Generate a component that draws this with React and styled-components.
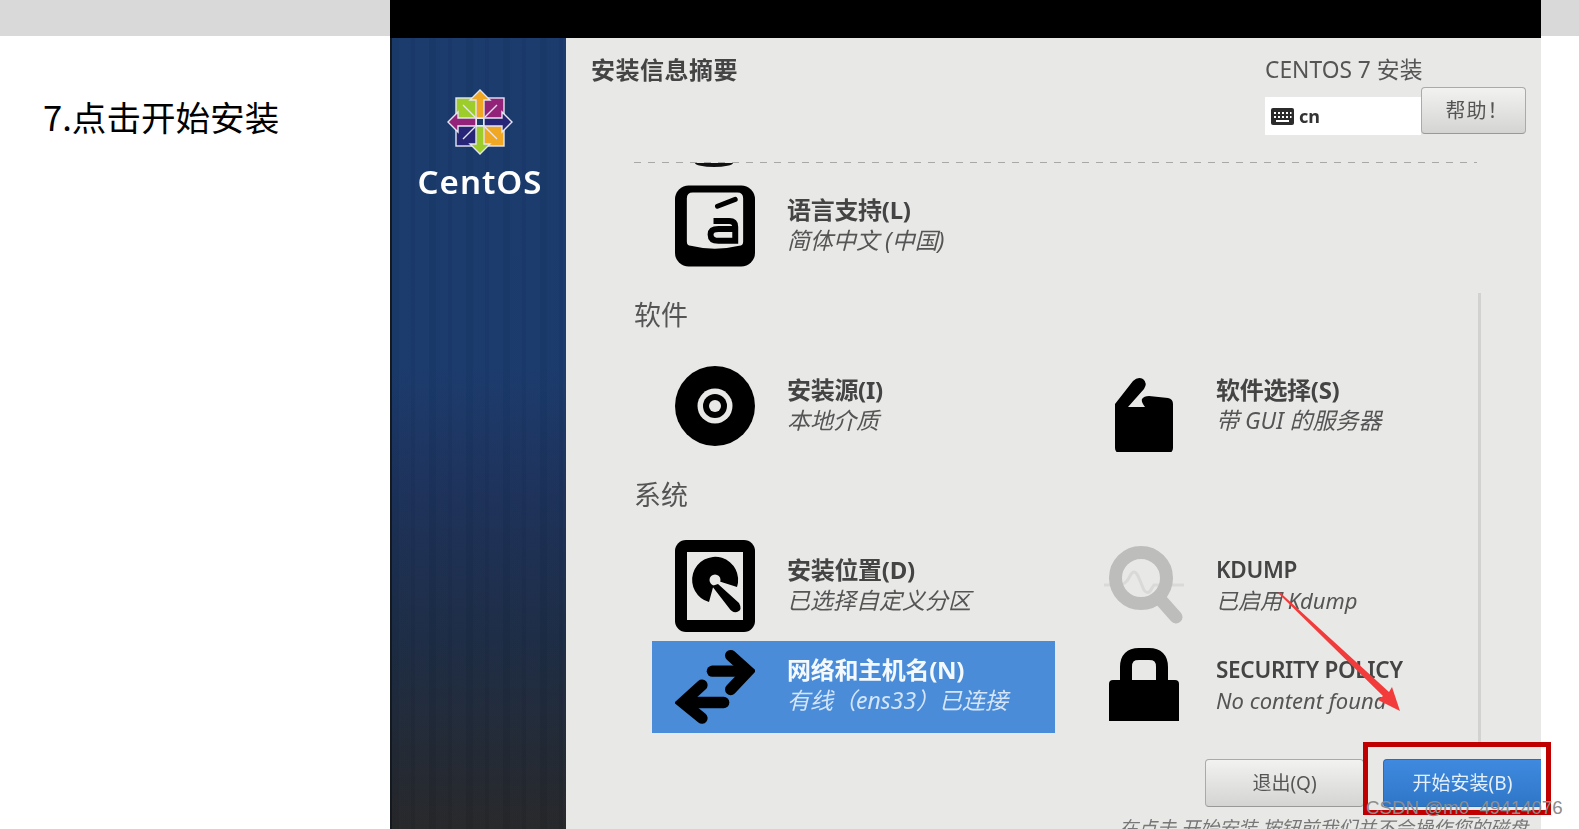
import styled, { createGlobalStyle } from "styled-components";

const GlobalStyle = createGlobalStyle`
  html, body {
    margin: 0;
    padding: 0;
    background: #fff;
  }
  body {
    font-family: "Noto Sans", "Noto Sans CJK SC", sans-serif;
  }
`;

const Page = styled.div`
  position: relative;
  display: grid;
  grid-template-columns: 390px 1151px 38px;
  width: 1579px;
  height: 829px;
  overflow: hidden;
  background: #fff;
`;

const Strip = styled.div`
  height: 36px;
  background: #d9d9d9;
`;

const Caption = styled.h1`
  margin: 56px 0 0 43px;
  font-size: 34.6px;
  line-height: 48px;
  font-weight: 400;
  color: #000;
  font-family: "Noto Sans CJK SC", sans-serif;
`;

const Screen = styled.div`
  display: flex;
  flex-direction: column;
  height: 829px;
  overflow: hidden;
  filter: blur(0.45px);
`;

const BlackBar = styled.div`
  flex: none;
  height: 38px;
  background: #000;
`;

const Body = styled.div`
  flex: 1;
  display: flex;
  min-height: 0;
`;

const Sidebar = styled.aside`
  flex: none;
  box-sizing: border-box;
  width: 176px;
  display: flex;
  flex-direction: column;
  align-items: center;
  padding: 50px 0 0 2px;
  border-left: 2px solid #14181f;
  background:
    repeating-linear-gradient(90deg, rgba(0, 0, 0, 0.025) 0 7px, rgba(255, 255, 255, 0.008) 7px 19px, rgba(0, 0, 0, 0.015) 19px 23px, rgba(255, 255, 255, 0.012) 23px 37px),
    linear-gradient(180deg, #1a3a6c 0, #1a3a6c 330px, #1c3159 460px, #1c2c45 600px, #262729 791px);
`;

const Wordmark = styled.div`
  margin-top: 6px;
  font-family: "Noto Sans", sans-serif;
  font-size: 33px;
  line-height: 40px;
  font-weight: 600;
  letter-spacing: 1px;
  color: #fff;
`;

const Content = styled.main`
  flex: 1;
  display: flex;
  flex-direction: column;
  min-width: 0;
  background: #e8e8e7;
  color: #444;
`;

const Header = styled.header`
  flex: none;
  box-sizing: border-box;
  height: 124px;
  display: flex;
  justify-content: space-between;
  padding: 16px 15px 0 25px;
`;

const Title = styled.h2`
  margin: 0;
  font-size: 24px;
  line-height: 31px;
  font-weight: 700;
  letter-spacing: 0.5px;
  color: #444;
`;

const HeaderRight = styled.div`
  width: 261px;
`;

const Product = styled.div`
  margin-bottom: 2px;
  font-size: 22.8px;
  line-height: 31px;
  color: #555;
`;

const Controls = styled.div`
  display: flex;
  align-items: flex-end;
`;

const Layout = styled.div`
  box-sizing: border-box;
  width: 156px;
  height: 38px;
  margin-bottom: -1px;
  display: flex;
  align-items: center;
  gap: 5px;
  padding-left: 6px;
  background: #fff;
  font-size: 18px;
  font-weight: 700;
  color: #333;
`;

const Button = styled.button`
  box-sizing: border-box;
  border: 1px solid #aaa;
  border-bottom-color: #999;
  border-radius: 4px;
  background: linear-gradient(180deg, #f2f2f1, #d4d4d3);
  color: #555;
  font-family: inherit;
  font-size: 20px;
  padding: 0 0 3px;
`;

const HelpButton = styled(Button)`
  width: 105px;
  height: 47px;
  padding-left: 7px;
  letter-spacing: 1px;
`;

const Hub = styled.div`
  position: relative;
  flex: 1;
  margin-left: 68px;
`;

const Dashes = styled.div`
  width: 843px;
  height: 1px;
  background: repeating-linear-gradient(90deg, #a8a8a8 0 7px, transparent 7px 14px);
`;

const ClippedIcon = styled.div`
  width: 38px;
  height: 4px;
  margin: 0 0 14px 61px;
  background: #111;
  border-radius: 0 0 50% 50% / 0 0 100% 100%;
`;

const Scrollbar = styled.div`
  position: absolute;
  top: 131px;
  left: 844px;
  width: 3px;
  height: 452px;
  background: #d2d2d1;
`;

const SectionLabel = styled.h3`
  margin: 24px 0 28px;
  font-size: 27px;
  line-height: 36px;
  font-weight: 400;
  color: #555;
`;

const Grid = styled.div`
  display: grid;
  grid-template-columns: 403px 403px;
  column-gap: 26px;
  row-gap: 8px;
  margin-left: 18px;
`;

const SpokeRow = styled.div`
  height: 92px;
  display: flex;
  align-items: center;
  gap: 32px;
  padding-left: 23px;
  background: ${(props) => (props.$active ? "#4a8cd8" : "transparent")};
`;

const IconSlot = styled.div`
  flex: none;
  width: 80px;
  height: 92px;
  margin-top: -2px;
  display: flex;
  align-items: center;
  justify-content: center;
`;

const SpokeText = styled.div`
  display: flex;
  flex-direction: column;
  margin-top: -4px;
  white-space: nowrap;
`;

const SpokeName = styled.div`
  font-size: ${(props) => (props.$latin ? "22.5px" : "24px")};
  line-height: 30px;
  font-weight: ${(props) => (props.$latin ? 600 : 700)};
  letter-spacing: -0.3px;
  color: ${(props) => (props.$active ? "#f4f9fe" : "#444")};
`;

const SpokeStatus = styled.div`
  font-size: ${(props) => (props.$latin ? "22px" : "23px")};
  line-height: 30px;
  font-style: italic;
  color: ${(props) => (props.$active ? "#d4e5f8" : "#555")};
`;

const Footer = styled.div`
  display: flex;
  justify-content: flex-end;
  gap: 19px;
  margin-top: 26px;
  margin-left: -68px;
`;

const QuitButton = styled(Button)`
  width: 159px;
  height: 48px;
  font-size: 19px;
`;

const StartButton = styled(Button)`
  flex: none;
  width: 158px;
  height: 48px;
  border: 1px solid #2a6cb8;
  border-right: 0;
  border-radius: 4px 0 0 4px;
  background: linear-gradient(180deg, #3f8ae0, #2f76c6);
  color: #e6f0fb;
  font-size: 19px;
`;

const Warning = styled.div`
  margin: 9px 13px 0 0;
  text-align: right;
  font-size: 19px;
  line-height: 24px;
  font-style: italic;
  color: #777;
  white-space: nowrap;
`;

const RedBox = styled.div`
  position: absolute;
  left: 1363px;
  top: 742px;
  box-sizing: border-box;
  width: 188px;
  height: 73px;
  border: 5px solid #c00000;
`;

const ArrowMark = styled.svg`
  position: absolute;
  left: 1270px;
  top: 585px;
`;

const Watermark = styled.div`
  position: absolute;
  left: 1366px;
  top: 796px;
  font-family: "Liberation Sans", sans-serif;
  font-size: 18.7px;
  line-height: 24px;
  color: #8d8d8d;
  white-space: nowrap;
`;

function CentosLogo() {
  return (
    <svg width="68" height="68" viewBox="-34 -34 68 68">
      <g stroke="#e6e6f2" strokeWidth="1.4" strokeLinejoin="miter">
        <rect x="-24" y="-24" width="22" height="22" fill="#9ccd2a" />
        <rect x="2" y="-24" width="22" height="22" fill="#932279" />
        <rect x="2" y="2" width="22" height="22" fill="#efa724" />
        <rect x="-24" y="2" width="22" height="22" fill="#262577" />
        <path d="M0 -32 L10 -22 H4 V-4 H-4 V-22 H-10 Z" fill="#efa724" />
        <path d="M32 0 L22 10 V4 H4 V-4 H22 V-10 Z" fill="#262577" />
        <path d="M0 32 L-10 22 H-4 V4 H4 V22 H10 Z" fill="#9ccd2a" />
        <path d="M-32 0 L-22 -10 V-4 H-4 V4 H-22 V10 Z" fill="#932279" />
        <path d="M-5 -5 L-17 -17 M5 -5 L17 -17 M5 5 L17 17 M-5 5 L-17 17" fill="none" />
      </g>
      <rect x="-3.5" y="-3.5" width="7" height="7" fill="#1a3a6c" stroke="#e6e6f2" strokeWidth="1" />
    </svg>
  );
}

function KeyboardIcon() {
  return (
    <svg width="23" height="17" viewBox="0 0 23 17">
      <rect width="23" height="17" rx="2" fill="#2b2b2b" />
      <path
        d="M3 4h2v2H3zM7 4h2v2H7zM11 4h2v2h-2zM15 4h2v2h-2zM19 4h1.500v2H19zM3 8h2v2H3zM7 8h2v2H7zM11 8h2v2h-2zM15 8h2v2h-2zM19 8h1.500v2H19zM5 12h13v2H5z"
        fill="#fff"
      />
    </svg>
  );
}

function LanguageIcon() {
  return (
    <svg width="81" height="82" viewBox="0 0 81 82">
      <rect width="81" height="82" rx="14" fill="#000" />
      <path d="M12 13 Q12 7 18 7 H63 Q69 7 69 13 V57 Q69 61 65 61 Q40 67 16 61 Q12 61 12 57 Z" fill="#e8e8e7" />
      <path d="M43 21 L61 14" stroke="#000" strokeWidth="5" strokeLinecap="round" />
      <path
        d="M39 36 H55 Q61 36 61 42 V56 H44 Q36 56 36 49.500 Q36 44 44 44 H61"
        fill="none"
        stroke="#000"
        strokeWidth="6"
      />
    </svg>
  );
}

function DiscIcon() {
  return (
    <svg width="80" height="80" viewBox="0 0 80 80">
      <circle cx="40" cy="40" r="40" fill="#000" />
      <circle cx="40" cy="40" r="17.500" fill="#e8e8e7" />
      <circle cx="40" cy="40" r="12" fill="#000" />
      <circle cx="40" cy="40" r="6" fill="#e8e8e7" />
    </svg>
  );
}

function SoftwareIcon() {
  return (
    <svg width="58" height="92" viewBox="0 -18 58 92">
      <path
        d="M0 26 L18 3 Q23 -2 28 1 Q33 5 29 11 L13 29 H30 Q26 24 27 21 Q29 18 34 18 L53 20 Q58 21 58 26 V70 Q58 75 53 75 H5 Q0 75 0 70 Z"
        fill="#000"
      />
    </svg>
  );
}

function DiskIcon() {
  return (
    <svg width="80" height="92" viewBox="0 0 80 92">
      <rect width="80" height="92" rx="11" fill="#000" />
      <rect x="12" y="12" width="56" height="68" fill="#e8e8e7" />
      <path d="M62 47 A23 23 0 1 0 34 62 L40 40 Z" fill="#000" />
      <circle cx="40" cy="40" r="5.500" fill="#e8e8e7" />
      <path d="M37 46 L43 44 L64 63 Q68 70 62 72 Q57 73 54 68 Z" fill="#000" />
    </svg>
  );
}

function KdumpIcon() {
  return (
    <svg width="80" height="80" viewBox="0 0 80 80">
      <path
        d="M0 39 H14 Q22 39 26 30 Q30 22 34 30 L40 44 Q44 50 48 42 L50 39 H80"
        fill="none"
        stroke="#d9d9d8"
        strokeWidth="3"
      />
      <circle cx="37" cy="32" r="25.500" fill="none" stroke="#bdbdbc" strokeWidth="13" />
      <path d="M56 53 L72 71" stroke="#bdbdbc" strokeWidth="13" strokeLinecap="round" />
    </svg>
  );
}

function NetworkIcon() {
  return (
    <svg width="92" height="86" viewBox="0 0 92 86">
      <g fill="none" stroke="#000" strokeWidth="13" strokeLinecap="round" strokeLinejoin="miter">
        <path d="M43 26 H82" />
        <path d="M64 8 L84 26 L64 47" />
        <path d="M56 62 H14" />
        <path d="M31 42 L9 62 L31 80" />
      </g>
    </svg>
  );
}

function LockIcon() {
  return (
    <svg width="70" height="78" viewBox="0 0 70 78">
      <path d="M17 36 V20 Q17 7 30 7 H40 Q53 7 53 20 V36" fill="none" stroke="#000" strokeWidth="12" />
      <path d="M4 33 H66 Q70 33 70 37 V74 H0 V37 Q0 33 4 33 Z" fill="#000" />
    </svg>
  );
}

function Spoke({ icon, name, status, active, latin }) {
  return (
    <SpokeRow $active={active}>
      <IconSlot>{icon}</IconSlot>
      <SpokeText>
        <SpokeName $active={active} $latin={latin}>{name}</SpokeName>
        <SpokeStatus $active={active} $latin={latin}>{status}</SpokeStatus>
      </SpokeText>
    </SpokeRow>
  );
}

function App() {
  return (
    <Page>
      <GlobalStyle />
      <div>
        <Strip />
        <Caption>7.点击开始安装</Caption>
      </div>
      <Screen>
        <BlackBar />
        <Body>
          <Sidebar>
            <CentosLogo />
            <Wordmark>CentOS</Wordmark>
          </Sidebar>
          <Content>
            <Header>
              <Title>安装信息摘要</Title>
              <HeaderRight>
                <Product>CENTOS 7 安装</Product>
                <Controls>
                  <Layout>
                    <KeyboardIcon />
                    cn
                  </Layout>
                  <HelpButton>帮助！</HelpButton>
                </Controls>
              </HeaderRight>
            </Header>
            <Hub>
              <Dashes />
              <ClippedIcon />
              <Scrollbar />
              <Grid>
                <Spoke icon={<LanguageIcon />} name="语言支持(L)" status="简体中文 (中国)" />
              </Grid>
              <SectionLabel>软件</SectionLabel>
              <Grid>
                <Spoke icon={<DiscIcon />} name="安装源(I)" status="本地介质" />
                <Spoke icon={<SoftwareIcon />} name="软件选择(S)" status="带 GUI 的服务器" />
              </Grid>
              <SectionLabel>系统</SectionLabel>
              <Grid>
                <Spoke icon={<DiskIcon />} name="安装位置(D)" status="已选择自定义分区" />
                <Spoke icon={<KdumpIcon />} name="KDUMP" status="已启用 Kdump" latin />
                <Spoke icon={<NetworkIcon />} name="网络和主机名(N)" status="有线（ens33）已连接" active />
                <Spoke icon={<LockIcon />} name="SECURITY POLICY" status="No content found" latin />
              </Grid>
              <Footer>
                <QuitButton>退出(Q)</QuitButton>
                <StartButton>开始安装(B)</StartButton>
              </Footer>
              <Warning>在点击 开始安装 按钮前我们并不会操作您的磁盘</Warning>
            </Hub>
          </Content>
        </Body>
      </Screen>
      <div>
        <Strip />
      </div>
      <ArrowMark width="140" height="135" viewBox="0 0 140 135">
        <path d="M8 8 L9.500 7 L119 107 L122 102 L130 126 L108 115 L113 111 Z" fill="#f23b3b" />
      </ArrowMark>
      <RedBox />
      <Watermark>CSDN @m0_49414076</Watermark>
    </Page>
  );
}

export default App;
